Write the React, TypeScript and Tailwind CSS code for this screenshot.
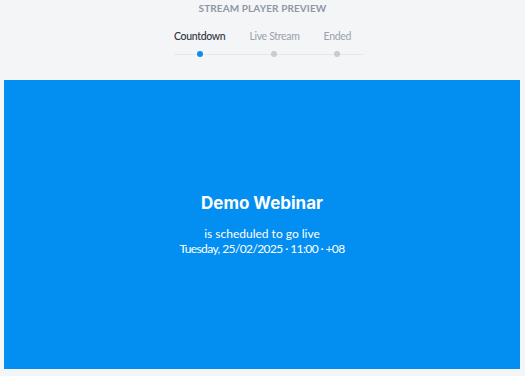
const tabs = [
  { label: "Countdown", active: true },
  { label: "Live Stream", active: false },
  { label: "Ended", active: false },
];

export default function App() {
  return (
    <div
      className="h-[376px] w-[525px] overflow-hidden bg-[#f4f5f7]"
      style={{ fontFamily: "Lato, 'Noto Sans', sans-serif" }}
    >
      <div className="flex h-[80px] flex-col items-center">
        <div className="pt-[1px] text-[10px] font-bold uppercase leading-[14px] tracking-[0.01em] text-[#8f97a4]">
          Stream Player Preview
        </div>
        <div className="ml-3 mt-[14px] flex">
          <div className="relative flex gap-3">
            <div className="absolute bottom-[2px] left-0 right-0 h-px bg-[#e6e8ec]" />
            {tabs.map((t) => (
              <div key={t.label} className="relative pr-3">
                <div className="flex flex-col items-center">
                  <span
                    className={
                      "text-[10.5px] leading-[14px] tracking-[-0.03em] " +
                      (t.active ? "font-medium text-[#2f3440]" : "text-[#9aa1ad]")
                    }
                  >
                    {t.label}
                  </span>
                  <span
                    className={
                      "mt-[8px] block h-[6px] w-[6px] rounded-full " +
                      (t.active ? "bg-[#0a8ff0]" : "bg-[#c6cbd4]")
                    }
                  />
                </div>
              </div>
            ))}
          </div>
        </div>
      </div>
      <div className="ml-1 flex h-[289px] w-[516px] flex-col items-center justify-center bg-[#038ef2] text-white">
        <div
          className="text-[17px] font-bold leading-[20px]"
          style={{ fontFamily: "Inter, Lato, sans-serif" }}
        >
          Demo Webinar
        </div>
        <div className="mt-[13px] text-[12px] leading-[15px]">
          is scheduled to go live
        </div>
        <div className="text-[12px] leading-[15px] tracking-[-0.05em]">
          Tuesday, 25/02/2025 · 11:00 · +08
        </div>
      </div>
    </div>
  );
}
